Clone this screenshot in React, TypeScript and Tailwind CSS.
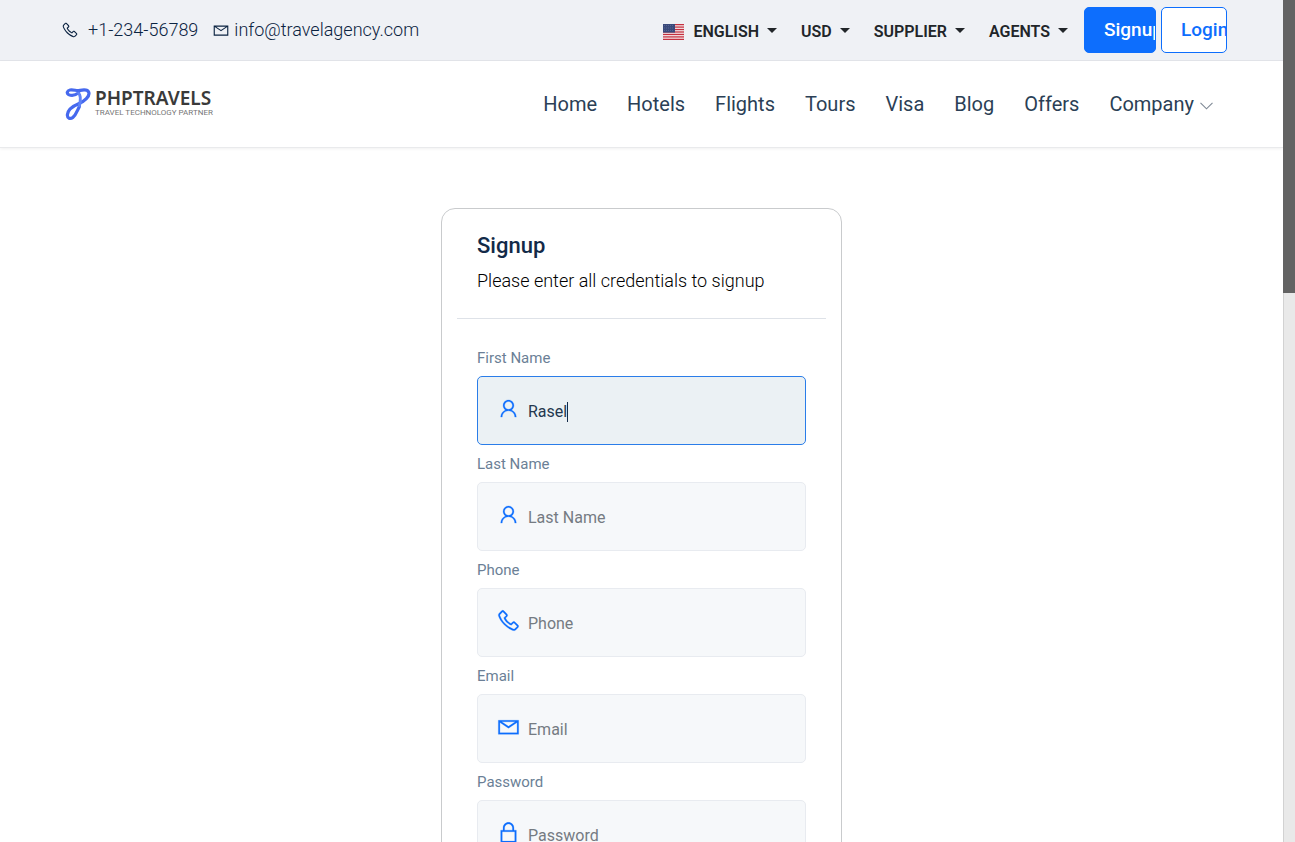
import { LiaEnvelope, LiaLockSolid, LiaPhoneSolid, LiaUser } from "react-icons/lia";
import type { IconType } from "react-icons";

type Field = {
  id: string;
  label: string;
  type: string;
  icon: IconType;
  value?: string;
};

const fields: Field[] = [
  { id: "first-name", label: "First Name", type: "text", icon: LiaUser, value: "Rasel" },
  { id: "last-name", label: "Last Name", type: "text", icon: LiaUser },
  { id: "phone", label: "Phone", type: "tel", icon: LiaPhoneSolid },
  { id: "email", label: "Email", type: "email", icon: LiaEnvelope },
  { id: "password", label: "Password", type: "password", icon: LiaLockSolid },
];

const links = ["Home", "Hotels", "Flights", "Tours", "Visa", "Blog", "Offers"];

function Flag() {
  return (
    <svg width="21" height="16" viewBox="0 0 21 16" className="mr-[9px]" aria-hidden="true">
      <rect width="21" height="16" fill="#f3e6e8" />
      {[0, 2.46, 4.92, 7.38, 9.84, 12.3, 14.77].map((y) => (
        <rect key={y} y={y} width="21" height="1.23" fill="#c5303f" />
      ))}
      <rect width="12" height="8.6" fill="#3a4a7c" />
      {[1.5, 4, 6.5].map((y) => (
        <path key={y} d={`M1 ${y}H11`} stroke="#69759f" strokeWidth="0.6" strokeDasharray="1 1" />
      ))}
    </svg>
  );
}

function Menu({ label, flag = false }: { label: string; flag?: boolean }) {
  return (
    <button type="button" aria-haspopup="menu" className="flex items-center text-[16px] leading-6 font-semibold text-[#212529]">
      {flag && <Flag />}
      {label}
      <svg width="10" height="5" viewBox="0 0 10 5" className="mb-[3px] ml-2" aria-hidden="true">
        <path d="M0 0H10L5 5Z" fill="currentColor" />
      </svg>
    </button>
  );
}

function Logo() {
  return (
    <a href="#" className="flex items-center gap-1">
      <svg width="27" height="34" viewBox="0 0 27 34" fill="none" aria-hidden="true">
        <path
          d="M14.6 5.8C11.5 8.2 7.4 8.8 4.6 7.6C2.4 6.4 3 3.6 6 3C10 2.4 12.5 4.2 16.2 3.4C20 2.6 23.8 2.8 24.8 5.4C26 9.4 20.5 14.4 14.6 16.8C8.8 19.2 4 22.6 3.4 27.6C3 31.4 6.4 32.4 8.8 30.4C12.2 27.6 13.2 23.6 15.4 19.4"
          stroke="#4669ee"
          strokeWidth="3.2"
          strokeLinecap="round"
        />
        <path d="M14 5.6C17.4 8.2 17 13 15.2 19.8" stroke="#5f83f7" strokeWidth="3" />
      </svg>
      <span className="flex flex-col font-['Noto_Sans','Open_Sans',sans-serif]">
        <span className="text-[19px] leading-[18px] font-semibold text-[#3a3a3a]">PHPTRAVELS</span>
        <span className="font-[Roboto,sans-serif] text-[8px] leading-3 text-[#777]">TRAVEL TECHNOLOGY PARTNER</span>
      </span>
    </a>
  );
}

function FormField({ field }: { field: Field }) {
  const Icon = field.icon;
  const active = field.value !== undefined;
  return (
    <div>
      <label htmlFor={field.id} className="block pt-[7px] pb-[6px] text-[15px] leading-6 text-[#6b7f96]">
        {field.label}
      </label>
      <div
        className={
          active
            ? "flex h-[69px] items-center rounded-[5px] border border-[#2a7de9] bg-[#ebf1f4] pl-[18px]"
            : "flex h-[69px] items-center rounded-[5px] border border-[#e8ebf0] bg-[#f6f8fa] pl-[18px]"
        }
      >
        <Icon className="mr-[7px] mb-1 size-[25px] shrink-0 stroke-[#0d6efd] stroke-[0.3] text-[#0d6efd]" aria-hidden="true" />
        <input
          id={field.id}
          type={field.type}
          defaultValue={field.value}
          placeholder={field.label}
          className={
            active
              ? "mt-[3px] bg-transparent text-[16px] leading-6 text-[#24384f] outline-none [field-sizing:content]"
              : "mt-[3px] w-full min-w-0 bg-transparent text-[16px] leading-6 text-[#24384f] outline-none placeholder:text-[#757b82]"
          }
        />
        {active && <span className="mt-[3px] h-5 w-px bg-[#132a48]" />}
      </div>
    </div>
  );
}

export default function App() {
  return (
    <div className="flex h-screen overflow-hidden bg-white font-[Roboto,sans-serif]">
      <div className="min-w-0 flex-1">
        <div className="border-b border-[#e3e5ea] bg-[#eff1f5]">
          <div className="flex h-[60px] items-center justify-between pr-14 pl-[61px]">
            <div className="flex items-center gap-[14px] text-[18px] leading-6 font-light text-[#0b2341]">
              <a href="tel:+1-234-56789" className="flex items-center gap-[9px]">
                <LiaPhoneSolid className="size-[18px]" aria-hidden="true" />
                +1-234-56789
              </a>
              <a href="mailto:info@travelagency.com" className="flex items-center gap-1">
                <LiaEnvelope className="size-[18px]" aria-hidden="true" />
                info@travelagency.com
              </a>
            </div>
            <div className="flex items-center">
              <div className="mr-4 flex items-center gap-6 pt-[3px]">
                <Menu label="ENGLISH" flag />
                <Menu label="USD" />
                <Menu label="SUPPLIER" />
                <Menu label="AGENTS" />
              </div>
              <div className="flex gap-[5px] text-[19px] font-medium">
                <a href="#" className="flex h-[46px] w-[72px] items-center overflow-hidden rounded-[5px] border border-[#0d6efd] bg-[#0d6efd] pl-[19px] text-white">
                  Signup
                </a>
                <a href="#" className="flex h-[46px] w-[66px] items-center overflow-hidden rounded-[5px] border border-[#0d6efd] bg-white pl-[19px] text-[#0d6efd]">
                  Login
                </a>
              </div>
            </div>
          </div>
        </div>

        <header className="flex h-[87px] items-center justify-between border-b border-[#e9eaec] pr-[70px] pl-16 shadow-[0_1px_3px_rgba(0,0,0,0.06)]">
          <Logo />
          <nav className="flex items-center gap-[30px] text-[20px] leading-6 text-[#2b3f56]">
            {links.map((link) => (
              <a key={link} href="#">
                {link}
              </a>
            ))}
            <a href="#" className="flex items-center gap-[6px]">
              Company
              <svg width="13" height="8" viewBox="0 0 13 8" fill="none" className="mt-1" aria-hidden="true">
                <path d="M0.5 0.8L6.5 6.8L12.5 0.8" stroke="#7f8995" strokeWidth="1.1" />
              </svg>
            </a>
          </nav>
        </header>

        <main className="flex justify-center pt-[60px]">
          <form className="w-full max-w-[401px] rounded-[14px] border border-[#c9cbcd] px-[15px] pb-8">
            <div className="border-b border-[#dee2e8] px-5 pt-[23px] pb-6">
              <h1 className="text-[22px] leading-7 font-medium text-[#132a48]">Signup</h1>
              <p className="mt-2 text-[18px] leading-[26px] font-light text-black">Please enter all credentials to signup</p>
            </div>
            <div className="px-5 pt-5">
              {fields.map((field) => (
                <FormField key={field.id} field={field} />
              ))}
            </div>
          </form>
        </main>
      </div>
      <div className="w-3 shrink-0 border-l border-[#d2d2d2] bg-[#e9e9e9]" aria-hidden="true">
        <div className="-ml-px h-[293px] bg-[#636363]" />
      </div>
    </div>
  );
}
